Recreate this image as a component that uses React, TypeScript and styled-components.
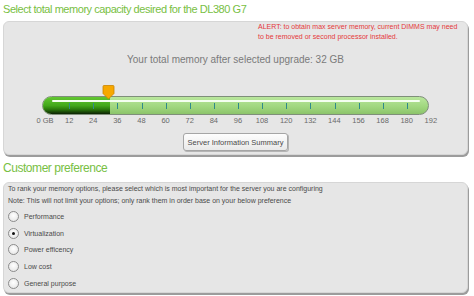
import React from 'react';
import styled, { createGlobalStyle } from 'styled-components';

const GlobalStyle = createGlobalStyle`
  html, body {
    margin: 0;
    padding: 0;
    background: #fff;
  }
  body {
    font-family: "Liberation Sans", Arial, sans-serif;
  }
`;

const Page = styled.div`
  width: 474px;
  height: 296px;
  padding: 0 6px 0 3px;
  box-sizing: border-box;
  overflow: hidden;
`;

const Heading = styled.h2<{ $h: number; $top?: number; $size: number }>`
  margin: 0;
  box-sizing: border-box;
  height: ${(p) => p.$h}px;
  padding-top: ${(p) => p.$top || 0}px;
  font-size: ${(p) => p.$size}px;
  line-height: 18px;
  font-weight: normal;
  color: #78c043;
  letter-spacing: -0.45px;
`;

const Panel = styled.div<{ $h: number }>`
  height: ${(p) => p.$h}px;
  box-sizing: border-box;
  background: #e6e6e6;
  border: 1px solid #d6d6d6;
  border-radius: 6px;
  box-shadow: 1px 2px 0 #9c9c9c;
  display: flex;
  flex-direction: column;
`;

const Alert = styled.div`
  align-self: flex-end;
  width: 209px;
  margin: 0;
  font-size: 7px;
  line-height: 10px;
  color: #e5383b;
`;

const Summary = styled.div`
  margin-top: 12px;
  text-align: center;
  font-size: 10px;
  line-height: 12px;
  color: #7a7a7a;
`;

const SliderWrap = styled.div`
  position: relative;
  margin: 19px 0 0 38px;
  width: 387px;
  height: 30px;
`;

const Track = styled.div`
  position: absolute;
  left: 0;
  right: 0;
  bottom: 0;
  height: 19px;
  box-sizing: border-box;
  border-radius: 10px;
  border: 1px solid #7f8f7a;
  background: linear-gradient(#b9e79d, #9fd67d 60%, #8cc46b);
  overflow: hidden;
`;

const Fill = styled.div`
  height: 100%;
  background: linear-gradient(#62c731, #43a81a 50%, #2c7c0c 72%, #0c2204);
`;

const Shine = styled.div`
  position: absolute;
  left: 9px;
  right: 8px;
  top: 3px;
  height: 2px;
  border-radius: 1px;
  background: #f4fff0;
`;

const Tick = styled.div`
  position: absolute;
  top: 6px;
  width: 1px;
  height: 6px;
  background: #2f8a8a;
`;

const Marker = styled.svg`
  position: absolute;
  top: 0;
`;

const Labels = styled.div`
  display: grid;
  grid-template-columns: repeat(17, 24.12px);
  margin: 1px 0 0 29px;
  font-size: 7.5px;
  line-height: 10px;
  color: #6a6a6a;
  text-align: center;
`;

const ButtonRow = styled.div`
  display: flex;
  justify-content: center;
  margin-top: 7px;
`;

const Button = styled.button`
  width: 105px;
  height: 18px;
  padding: 0;
  border: 1px solid #a5a5a5;
  border-radius: 3px;
  background: linear-gradient(#fdfdfd, #e9e9e9);
  box-shadow: 1px 1px 0 #b5b5b5;
  font-family: inherit;
  font-size: 7.5px;
  color: #4a4a4a;
`;

const NoteLine = styled.div`
  padding-left: 4px;
  font-size: 7px;
  line-height: 12px;
  color: #4a4a4a;
`;

const OptionList = styled.div`
  display: flex;
  flex-direction: column;
  padding: 1px 0 0 4px;
`;

const Option = styled.label`
  display: flex;
  align-items: center;
  gap: 5px;
  height: 16.8px;
  font-size: 7px;
  color: #4a4a4a;
`;

const Radio = styled.span<{ $on?: boolean }>`
  width: 9px;
  height: 9px;
  border-radius: 50%;
  border: 1px solid #8c8c8c;
  background: radial-gradient(circle at 50% 40%, #ffffff, #e2e2e2);
  display: flex;
  align-items: center;
  justify-content: center;
  &::after {
    content: '';
    width: 3px;
    height: 3px;
    border-radius: 50%;
    background: ${(p) => (p.$on ? '#111' : 'transparent')};
  }
`;

const labels = ['0 GB', '12', '24', '36', '48', '60', '72', '84', '96', '108', '120', '132', '144', '156', '168', '180', '192'];
const options = ['Performance', 'Virtualization', 'Power efficency', 'Low cost', 'General purpose'];

const step = 386 / 16;
const value = 32;

export default function App() {
  const fillWidth = 3 + (value / 192) * 386;
  return (
    <Page>
      <GlobalStyle />
      <Heading $h={21} $size={11}>Select total memory capacity desired for the DL380 G7</Heading>
      <Panel $h={134}>
        <Alert>
          ALERT: to obtain max server memory, current DIMMS may need
          <br />
          to be removed or second processor installed.
        </Alert>
        <Summary>Your total memory after selected upgrade: 32 GB</Summary>
        <SliderWrap>
          <Track>
            <Fill style={{ width: fillWidth }} />
            <Shine />
            {labels.slice(1, 16).map((l, i) => (
              <Tick key={l} style={{ left: 2 + (i + 1) * step }} />
            ))}
          </Track>
          <Marker width="13" height="15" viewBox="0 0 13 15" style={{ left: fillWidth - 7 }}>
            <path d="M1 1.5 Q1 0.5 2 0.5 L11 0.5 Q12 0.5 12 1.5 L12 8.5 L6.5 14 L1 8.5 Z" fill="#f7a800" stroke="#c98400" strokeWidth="0.8" />
          </Marker>
        </SliderWrap>
        <Labels>
          {labels.map((l) => (
            <span key={l}>{l}</span>
          ))}
        </Labels>
        <ButtonRow>
          <Button>Server Information Summary</Button>
        </ButtonRow>
      </Panel>
      <Heading $h={27} $top={4} $size={12}>
        Customer preference
      </Heading>
      <Panel $h={111}>
        <NoteLine>To rank your memory options, please select which is most important for the server you are configuring</NoteLine>
        <NoteLine>Note: This will not limit your options; only rank them in order base on your below preference</NoteLine>
        <OptionList>
          {options.map((o) => (
            <Option key={o}>
              <Radio $on={o === 'Virtualization'} />
              {o}
            </Option>
          ))}
        </OptionList>
      </Panel>
    </Page>
  );
}
